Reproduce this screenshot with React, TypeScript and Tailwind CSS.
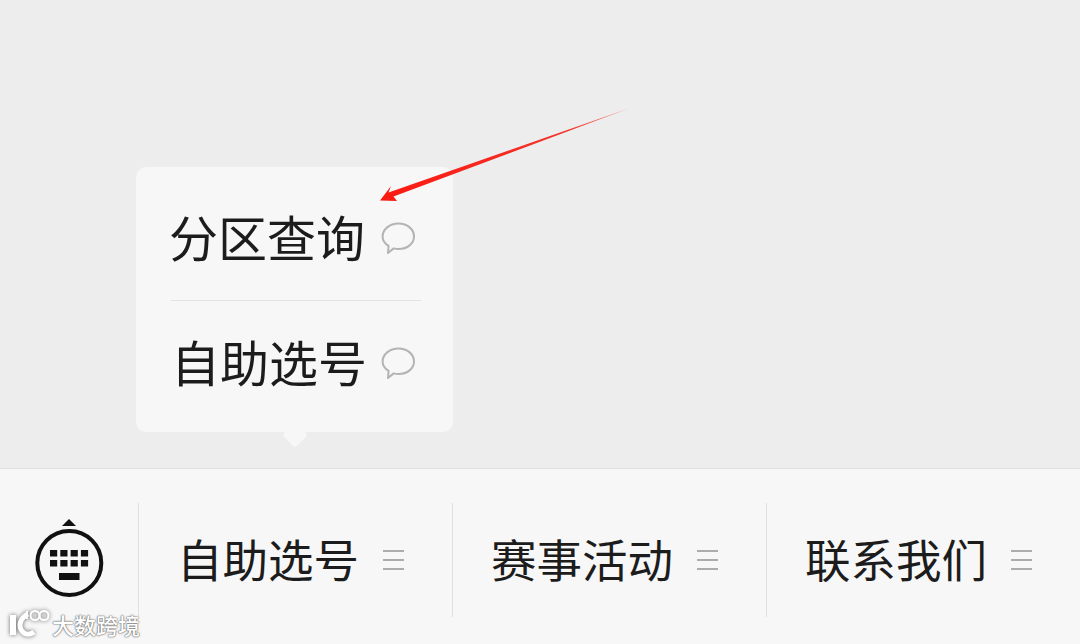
const cjk = "font-['Noto_Sans_CJK_SC','Noto_Sans',sans-serif]";

function Bubble() {
  return (
    <svg width="36" height="34" viewBox="0 0 36 34" fill="none" className="mt-[5px] shrink-0">
      <path
        d="M18.500 2.500C27.500 2.500 34 8.500 34 15.500S27.500 28 18.500 28c-1.700 0-3.300-.2-4.800-.6L8 32l.6-7.100C4.700 22.600 2.600 19.200 2.600 15.500 2.600 8.500 9.500 2.500 18.500 2.500Z"
        stroke="#b4b4b4"
        strokeWidth="2"
        strokeLinejoin="round"
      />
    </svg>
  );
}

function Lines() {
  return (
    <div className="flex w-[21px] flex-col gap-[7px]">
      <div className="h-[2px] bg-[#acacac]" />
      <div className="h-[2px] bg-[#acacac]" />
      <div className="h-[2px] bg-[#acacac]" />
    </div>
  );
}

function MenuItem({ label }: { label: string }) {
  return (
    <div className="flex h-[114px] w-[314px] items-center border-l border-[#e0e0e0] pl-[38px]">
      <span className="w-[206px] pb-[2px] text-[45.5px] leading-none text-[#1c1c1c]">{label}</span>
      <Lines />
    </div>
  );
}

function KeyboardIcon() {
  return (
    <svg width="70" height="80" viewBox="0 0 70 80">
      <path d="M35 0l7 7H28z" fill="#111" />
      <circle cx="35.300" cy="44" r="32" fill="none" stroke="#111" strokeWidth="4" />
      {[0, 1, 2, 3].map((i) => (
        <g key={i} fill="#111">
          <rect x={16 + i * 10.300} y="31" width="7.200" height="6.500" />
          <rect x={16 + i * 10.300} y="41" width="7.200" height="6.500" />
        </g>
      ))}
      <rect x="25" y="54" width="20.500" height="7" fill="#111" />
    </svg>
  );
}

function WatermarkLogo() {
  return (
    <svg width="42" height="30" viewBox="0 0 42 30" fill="none" className="drop-shadow-[0_0_2px_#666]">
      <path d="M5 6v20" stroke="#fff" strokeWidth="6" />
      <path d="M20 5C12 9 10 17 14 22c3 4 8 4 12 1" stroke="#fff" strokeWidth="5" />
      <path d="M19 2v8" stroke="#fff" strokeWidth="2" />
      <circle cx="27" cy="6.500" r="4.500" stroke="#fff" strokeWidth="2" />
      <circle cx="36" cy="6.500" r="4.500" stroke="#fff" strokeWidth="2" />
    </svg>
  );
}

function ArrowOverlay() {
  return (
    <svg width="1080" height="644" viewBox="0 0 1080 644" className="pointer-events-none absolute left-0 top-0">
      <defs>
        <linearGradient id="shaft" gradientUnits="userSpaceOnUse" x1="630" y1="108" x2="380" y2="200">
          <stop offset="0" stopColor="#f25a4e" stopOpacity="0.7" />
          <stop offset="0.25" stopColor="#f2332a" />
          <stop offset="1" stopColor="#fb1a12" />
        </linearGradient>
      </defs>
      <path d="M630 108 388.500 192.500 391 186 380 200.500 397 201 393.500 196.500Z" fill="url(#shaft)" />
    </svg>
  );
}

export default function App() {
  return (
    <div className={`relative flex h-[644px] w-[1080px] flex-col overflow-hidden bg-[#ededed] ${cjk}`}>
      <div className="h-[468px] shrink-0 pl-[136px] pt-[167px]">
        <div className="relative h-[265px] w-[317px] rounded-[10px] bg-[#f7f7f7]">
          <div className="ml-[35px] mr-[32px] flex h-[134px] items-center border-b border-[#e2e2e2] pt-[3px]">
            <span className="-ml-[2px] w-[211px] text-[49px] leading-none text-[#1c1c1c]">分区查询</span>
            <Bubble />
          </div>
          <div className="ml-[35px] flex h-[131px] items-center pb-[13px]">
            <span className="w-[209px] text-[49px] leading-none text-[#1c1c1c]">自助选号</span>
            <Bubble />
          </div>
          <div className="absolute left-[150px] top-[259px] h-[18px] w-[18px] rotate-45 rounded-[2px] bg-[#f7f7f7]" />
        </div>
      </div>
      <div className="flex flex-1 items-center border-t border-[#dfdfdf] bg-[#f7f7f7] pt-[6px]">
        <div className="flex w-[138px] justify-center pb-[1px]">
          <KeyboardIcon />
        </div>
        <MenuItem label="自助选号" />
        <MenuItem label="赛事活动" />
        <MenuItem label="联系我们" />
      </div>
      <div className="absolute bottom-[5px] left-[8px] flex items-center gap-[2px]">
        <WatermarkLogo />
        <span className="text-[22px] font-medium leading-none text-white [text-shadow:0_0_2px_#555,0_0_1px_#555]">大数跨境</span>
      </div>
      <ArrowOverlay />
    </div>
  );
}
